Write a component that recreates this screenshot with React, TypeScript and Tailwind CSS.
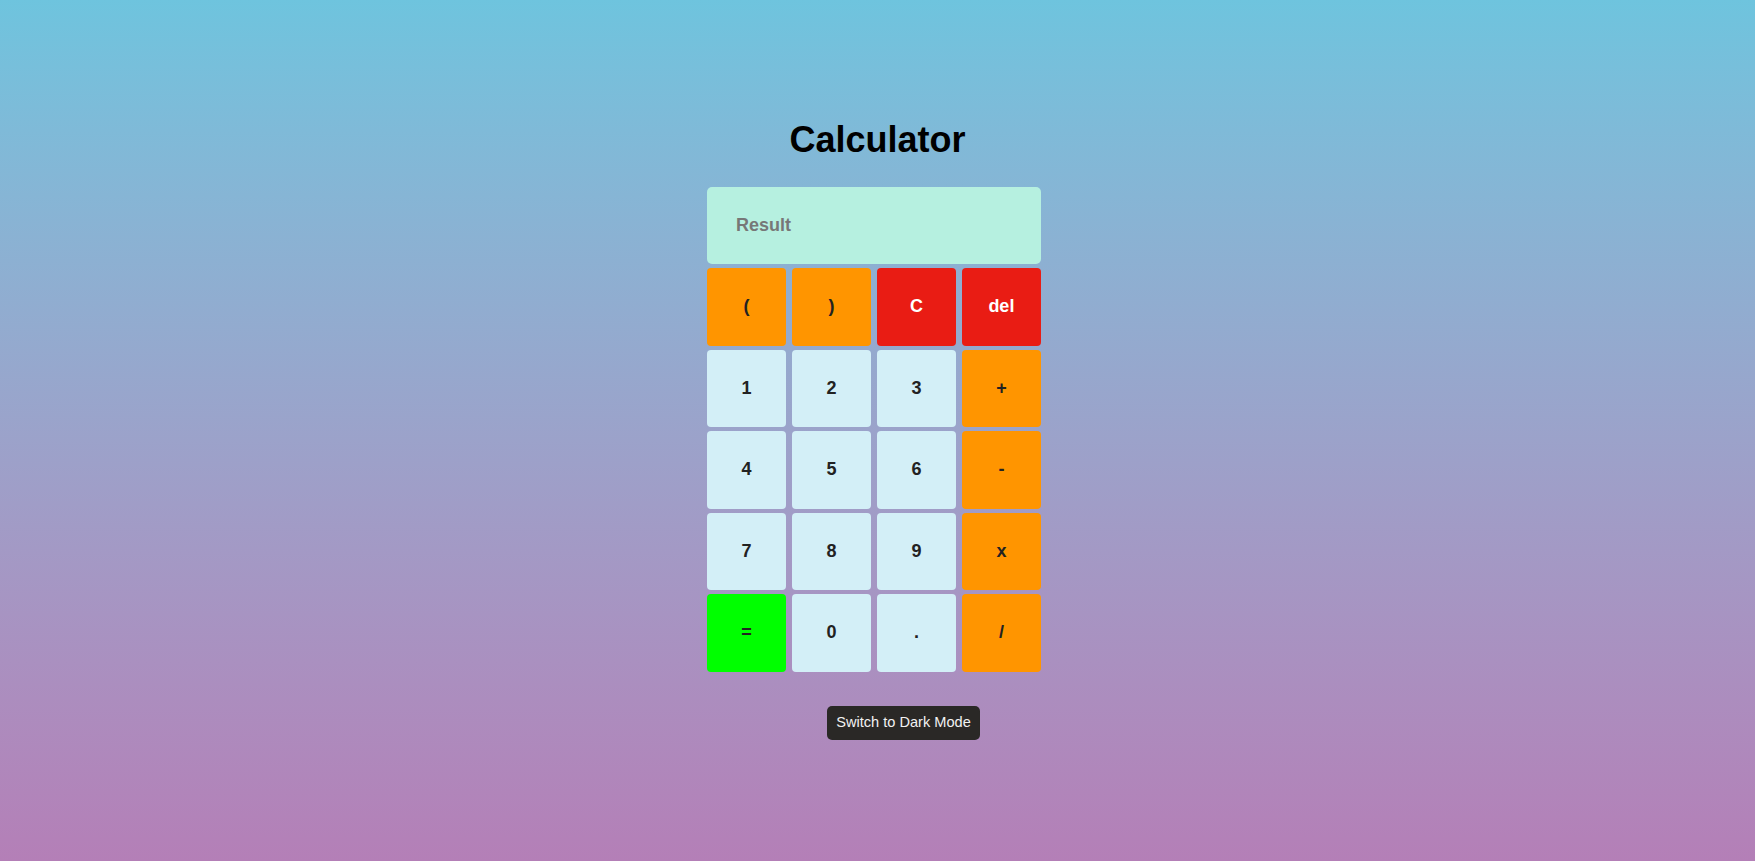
import { useState } from 'react';

type Key = {
  label: string;
  kind: 'num' | 'op' | 'clear' | 'eq';
};

const KEYS: Key[] = [
  { label: '(', kind: 'op' },
  { label: ')', kind: 'op' },
  { label: 'C', kind: 'clear' },
  { label: 'del', kind: 'clear' },
  { label: '1', kind: 'num' },
  { label: '2', kind: 'num' },
  { label: '3', kind: 'num' },
  { label: '+', kind: 'op' },
  { label: '4', kind: 'num' },
  { label: '5', kind: 'num' },
  { label: '6', kind: 'num' },
  { label: '-', kind: 'op' },
  { label: '7', kind: 'num' },
  { label: '8', kind: 'num' },
  { label: '9', kind: 'num' },
  { label: 'x', kind: 'op' },
  { label: '=', kind: 'eq' },
  { label: '0', kind: 'num' },
  { label: '.', kind: 'num' },
  { label: '/', kind: 'op' }
];

const keyStyles: Record<Key['kind'], string> = {
  num: 'bg-[#d3eff7] text-[#222]',
  op: 'bg-[#ff9500] text-[#222]',
  clear: 'bg-[#e91c14] text-white',
  eq: 'bg-[#00ff00] text-[#222]'
};

export default function App() {
  const [expr, setExpr] = useState('');
  const [dark, setDark] = useState(false);

  const press = (k: Key) => {
    if (k.label === 'C') return setExpr('');
    if (k.label === 'del') return setExpr((e) => e.slice(0, -1));
    if (k.label === '=') {
      try {
        // eslint-disable-next-line no-new-func
        const v = Function(`return (${expr.replace(/x/g, '*')})`)();
        setExpr(String(v));
      } catch {
        setExpr('Error');
      }
      return;
    }
    setExpr((e) => e + k.label);
  };

  return (
    <div
      className="min-h-screen w-full flex flex-col items-center pt-[119px] bg-gradient-to-b from-[#6ec4de] to-[#b47fb7]"
      style={{ fontFamily: '"Liberation Sans", Arial, sans-serif' }}
    >
      <h1 className="text-[36px] leading-[41px] font-bold text-black mb-[27px]">Calculator</h1>

      <div className="w-[334px] mr-[7px] flex flex-col gap-[4px]">
        {/* display */}
        <div className="h-[77px] rounded-[5px] bg-[#b6f0e0] flex items-center pl-[29px]">
          <span className={`text-[18px] font-bold ${expr ? 'text-[#222]' : 'text-[#777]'}`}>
            {expr || 'Result'}
          </span>
        </div>

        {/* keypad */}
        <div className="grid grid-cols-4 gap-x-[5.7px] gap-y-[4px]">
          {KEYS.map((k) => (
            <button
              key={k.label}
              onClick={() => press(k)}
              className={`h-[77.5px] rounded-[4px] text-[18px] font-bold flex items-center justify-center ${keyStyles[k.kind]}`}
            >
              {k.label}
            </button>
          ))}
        </div>
      </div>

      <button
        onClick={() => setDark((d) => !d)}
        className="mt-[34px] ml-[52px] h-[34px] px-[9px] rounded-[5px] bg-[#2a2826] text-[#f2f2f2] text-[14.6px] flex items-center"
      >
        {dark ? 'Switch to Light Mode' : 'Switch to Dark Mode'}
      </button>
    </div>
  );
}
